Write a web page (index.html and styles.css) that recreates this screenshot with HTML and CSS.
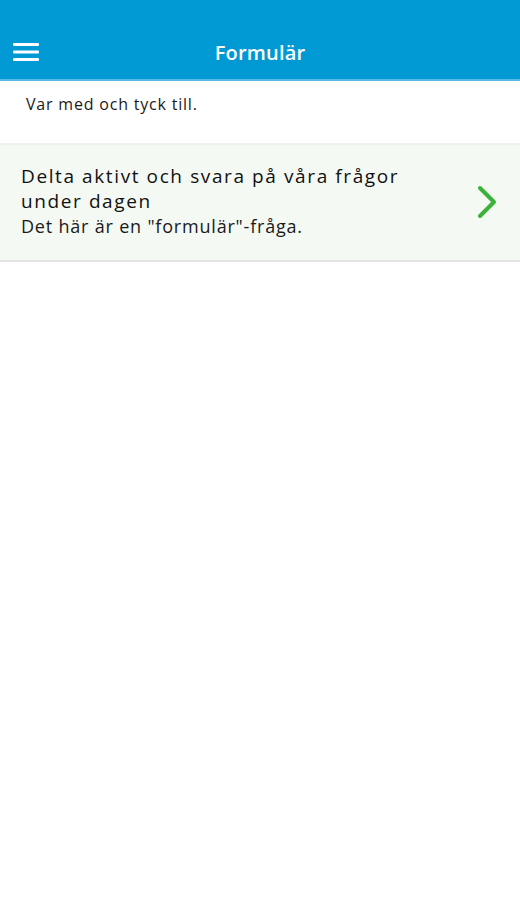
FILE: index.html
```html
<!DOCTYPE html>
<html lang="sv">
<head>
  <meta charset="UTF-8">
  <meta name="viewport" content="width=device-width, initial-scale=1.0">
  <title>Formulär</title>
  <link rel="stylesheet" href="styles.css">
</head>
<body>
  <header class="topbar">
    <button class="menu-btn" aria-label="Meny">
      <svg width="26" height="18" viewBox="0 0 26 18">
        <rect x="0" y="0" width="26" height="3" rx="1" fill="#fff"/>
        <rect x="0" y="7.5" width="26" height="3" rx="1" fill="#fff"/>
        <rect x="0" y="15" width="26" height="3" rx="1" fill="#fff"/>
      </svg>
    </button>
    <h1 class="title">Formulär</h1>
  </header>

  <p class="intro">Var med och tyck till.</p>

  <ul class="list">
    <li class="item">
      <div class="item-text">
        <div class="item-title">Delta aktivt och svara på våra frågor under dagen</div>
        <div class="item-desc">Det här är en "formulär"-fråga.</div>
      </div>
      <svg class="chevron" width="22" height="36" viewBox="0 0 22 36">
        <path d="M4 4 L18 18 L4 32" fill="none" stroke="#3bb33b" stroke-width="4" stroke-linecap="round" stroke-linejoin="round"/>
      </svg>
    </li>
  </ul>
</body>
</html>
```

FILE: styles.css
```css
* {
  margin: 0;
  padding: 0;
  box-sizing: border-box;
}
body {
  font-family: "Open Sans", Lato, sans-serif;
  background-color: #fff;
  color: #1a1a1a;
}
.topbar {
  height: 81px;
  background-color: #0099d3;
  border-bottom: 2px solid #5ab8e6;
  display: flex;
  align-items: flex-end;
  padding: 0 0 16px 13px;
  position: relative;
}
.menu-btn {
  background: none;
  border: none;
  display: flex;
  margin-bottom: 2px;
}
.title {
  position: absolute;
  left: 0;
  right: 0;
  bottom: 13px;
  text-align: center;
  color: #fff;
  font-size: 20px;
  font-weight: 600;
  letter-spacing: 0.2px;
  pointer-events: none;
}
.intro {
  font-size: 16px;
  letter-spacing: 0.8px;
  padding: 12px 26px 28px;
  line-height: 22px;
}
.list {
  list-style: none;
}
.item {
  background-color: #f5f9f4;
  border-top: 2px solid #eef1ee;
  border-bottom: 2px solid #e2e4e2;
  display: flex;
  align-items: center;
  padding: 19px 22px 21px 21px;
}
.item-text {
  flex: 1;
  padding-right: 40px;
}
.item-title {
  font-size: 19px;
  font-weight: 500;
  letter-spacing: 1.6px;
  line-height: 25px;
  color: #111;
}
.item-desc {
  font-size: 18px;
  line-height: 25px;
  letter-spacing: 0.8px;
}
.chevron {
  flex-shrink: 0;
}
```
